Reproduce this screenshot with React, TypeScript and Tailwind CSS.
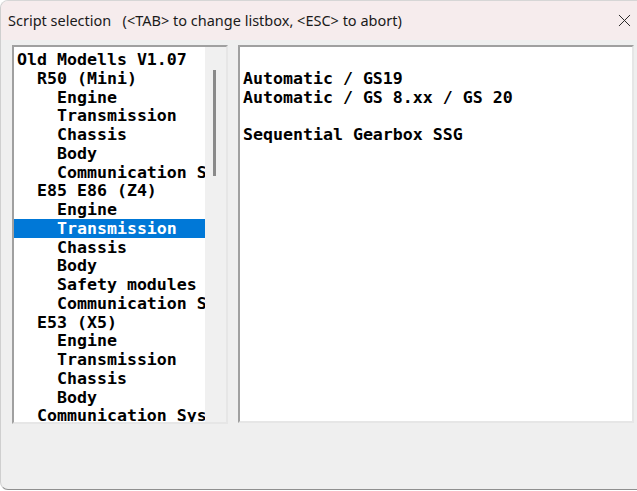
import { X } from 'lucide-react';

// left list rows, indented with spaces like the original listbox
const treeRows = [
  'Old Modells V1.07',
  '  R50 (Mini)',
  '    Engine',
  '    Transmission',
  '    Chassis',
  '    Body',
  '    Communication Sys',
  '  E85 E86 (Z4)',
  '    Engine',
  '    Transmission',
  '    Chassis',
  '    Body',
  '    Safety modules',
  '    Communication Sys',
  '  E53 (X5)',
  '    Engine',
  '    Transmission',
  '    Chassis',
  '    Body',
  '  Communication Sys',
];

const selectedRow = 9;

const scriptRows = ['', 'Automatic / GS19', 'Automatic / GS 8.xx / GS 20', '', 'Sequential Gearbox SSG'];

const monoFont = "font-['DejaVu_Sans_Mono','Liberation_Mono',monospace] font-bold text-[16.6px] leading-[18.75px]";

export default function App() {
  return (
    <div className="w-[637px] h-[491px] overflow-hidden bg-white">
      <div className="w-[660px] h-[490px] flex flex-col rounded-l-lg border-l border-t border-b border-l-[#cfcfcf] border-t-[#d6d6d6] border-b-[#8f8f8f] bg-[#efefef] overflow-hidden">
        {/* title bar */}
        <div className="h-[39px] shrink-0 flex items-center bg-[#f6eced] pl-[7px] pr-[25px]">
          <span className="flex-1 whitespace-pre font-['Noto_Sans','Open_Sans',sans-serif] text-[14.5px] text-[#1a1a1a]">
            {'Script selection   (<TAB> to change listbox, <ESC> to abort)'}
          </span>
          <X className="w-[21px] h-[21px] text-[#222]" strokeWidth={1.1} />
        </div>

        {/* body */}
        <div className="flex gap-[10px] pl-[11px] pt-[5px]">
          {/* tree listbox */}
          <div className="w-[216px] h-[379px] flex border-2 border-t-[#a0a0a0] border-l-[#a0a0a0] border-r-[#e6e6e6] border-b-[#e6e6e6] bg-white">
            <div className={`w-[191px] overflow-hidden pt-[3px] text-black ${monoFont}`}>
              {treeRows.map((row, i) => (
                <div
                  key={i}
                  className={`h-[18.75px] whitespace-pre pl-[3px] pt-[1px] ${i === selectedRow ? 'bg-[#0078d7] text-white' : ''}`}
                >
                  {row}
                </div>
              ))}
            </div>
            <div className="flex-1 bg-[#f0f0f0] flex justify-center pt-[23px] pr-[2px]">
              <div className="w-[3px] h-[106px] bg-[#8a8a8a]" />
            </div>
          </div>

          {/* script listbox */}
          <div className="w-[396px] h-[378px] border-2 border-t-[#a0a0a0] border-l-[#a0a0a0] border-r-[#e6e6e6] border-b-[#e6e6e6] bg-white">
            <div className={`pt-[4px] pl-[3px] text-black ${monoFont}`}>
              {scriptRows.map((row, i) => (
                <div key={i} className="h-[18.75px] whitespace-pre">
                  {row}
                </div>
              ))}
            </div>
          </div>
        </div>
      </div>
    </div>
  );
}
